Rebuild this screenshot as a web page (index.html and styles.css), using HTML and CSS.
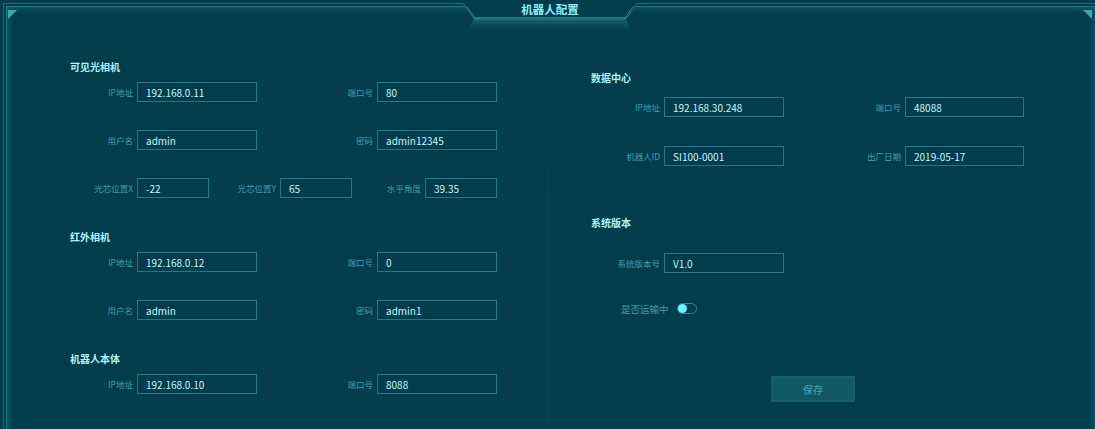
FILE: index.html
```html
<!DOCTYPE html>
<html lang="zh-CN">
<head>
    <meta charset="UTF-8">
    <meta name="viewport" content="width=device-width, initial-scale=1.0">
    <title>机器人配置</title>
    <link rel="stylesheet" href="styles.css">
</head>
<body>
    <div class="frame">
        <div class="panel">
            <!-- header notch cut into the top edge -->
            <svg class="notch" width="190" height="34" viewBox="0 0 190 34">
                <defs>
                    <linearGradient id="notch-glow" x1="0" y1="0" x2="0" y2="1">
                        <stop offset="0" stop-color="#2f8b97" stop-opacity="0.5"/>
                        <stop offset="1" stop-color="#2f8b97" stop-opacity="0"/>
                    </linearGradient>
                </defs>
                <polygon points="6,2 17,17 173,17 184,2" fill="#033d4d"/>
                <polygon points="19,18 171,18 176,30 14,30" fill="url(#notch-glow)"/>
                <path d="M0 3.5 H8 L18 17.5 H172 L182 3.5 H190" fill="none" stroke="#1f7784" stroke-width="1"/>
                <path d="M12 6.5 L20.5 19 H169.5 L178 6.5" fill="none" stroke="#2a8894" stroke-width="1"/>
            </svg>
            <h1 class="title">机器人配置</h1>
            <span class="corner corner-l"></span>
            <span class="corner corner-r"></span>

            <div class="cols">
                <div class="col col-left">
                    <section class="group">
                        <h2>可见光相机</h2>
                        <div class="rows">
                            <div class="row row-2">
                                <label>IP地址</label><input type="text" value="192.168.0.11">
                                <label>端口号</label><input type="text" value="80">
                            </div>
                            <div class="row row-2">
                                <label>用户名</label><input type="text" value="admin">
                                <label>密码</label><input type="text" value="admin12345">
                            </div>
                            <div class="row row-3">
                                <label>光芯位置X</label><input type="text" value="-22">
                                <label>光芯位置Y</label><input type="text" value="65">
                                <label>水平角度</label><input type="text" value="39.35">
                            </div>
                        </div>
                    </section>

                    <section class="group">
                        <h2>红外相机</h2>
                        <div class="rows">
                            <div class="row row-2">
                                <label>IP地址</label><input type="text" value="192.168.0.12">
                                <label>端口号</label><input type="text" value="0">
                            </div>
                            <div class="row row-2">
                                <label>用户名</label><input type="text" value="admin">
                                <label>密码</label><input type="text" value="admin1">
                            </div>
                        </div>
                    </section>

                    <section class="group">
                        <h2>机器人本体</h2>
                        <div class="rows">
                            <div class="row row-2">
                                <label>IP地址</label><input type="text" value="192.168.0.10">
                                <label>端口号</label><input type="text" value="8088">
                            </div>
                        </div>
                    </section>
                </div>

                <div class="col col-right">
                    <section class="group group-data">
                        <h2>数据中心</h2>
                        <div class="rows">
                            <div class="row row-2r">
                                <label>IP地址</label><input type="text" value="192.168.30.248">
                                <label>端口号</label><input type="text" value="48088">
                            </div>
                            <div class="row row-2r">
                                <label>机器人ID</label><input type="text" value="SI100-0001">
                                <label>出厂日期</label><input type="text" value="2019-05-17">
                            </div>
                        </div>
                    </section>

                    <section class="group group-version">
                        <h2>系统版本</h2>
                        <div class="rows">
                            <div class="row row-2r">
                                <label>系统版本号</label><input type="text" value="V1.0">
                            </div>
                        </div>
                    </section>

                    <div class="switch-row">
                        <span class="switch-label">是否运输中</span>
                        <input type="checkbox" id="transport" class="switch-input">
                        <label for="transport" class="switch"><span class="knob"></span></label>
                    </div>

                    <button type="button" class="save">保存</button>
                </div>
            </div>
        </div>
    </div>
</body>
</html>
```

FILE: styles.css
```css
body {
    margin: 0;
    background: #033d4d;
    font-family: "Noto Sans CJK SC", "Noto Sans", sans-serif;
    overflow: hidden;
}

.frame {
    margin: 3px -2px 0 3px;
    padding: 2px 0 0 2px;
    border-top: 1px solid #1c6a76;
    border-left: 1px solid #1c6a76;
}

.panel {
    position: relative;
    min-height: 440px;
    box-shadow: inset 0 0 0 1px rgba(52, 146, 160, 0.55), inset 0 0 10px rgba(58, 160, 176, 0.6);
}

.notch {
    position: absolute;
    left: 449px;
    top: -6px;
    display: block;
}

.title {
    position: absolute;
    left: 449px;
    top: -6px;
    width: 190px;
    margin: 0;
    line-height: 18px;
    font-size: 11.5px;
    font-weight: bold;
    text-align: center;
    color: #8eeefc;
}

.corner {
    position: absolute;
    top: 4px;
    width: 0;
    height: 0;
    border-top: 9px solid #3aa7b2;
}

.corner-l {
    left: 2px;
    border-right: 9px solid transparent;
}

.corner-r {
    right: 5px;
    border-left: 9px solid transparent;
}

.cols {
    display: flex;
    padding-top: 54px;
}

.col {
    min-height: 360px;
    box-sizing: border-box;
}

/* column divider fades in from the top */
.col-left {
    width: 543px;
    padding-left: 64px;
    border-right: 1px solid #08475a;
    border-image: linear-gradient(to bottom, rgba(8, 71, 90, 0) 0, rgba(8, 71, 90, 0) 90px, #08475a 150px) 1;
}

.col-right {
    padding-left: 42px;
    padding-top: 11px;
}

.group {
    margin-bottom: 32px;
}

.group h2 {
    margin: 0 0 8px;
    font-size: 10px;
    line-height: 14px;
    font-weight: bold;
    color: #aef2fd;
}

.rows {
    display: flex;
    flex-direction: column;
    gap: 28px;
}

.row {
    display: grid;
    column-gap: 4px;
    align-items: center;
}

.row-2 {
    grid-template-columns: 63px 120px 112px 120px;
}

.row-3 {
    grid-template-columns: 63px 72px 63px 72px 65px 72px;
}

.row-2r {
    grid-template-columns: 69px 120px 113px 119px;
}

.row label {
    font-size: 8.5px;
    color: #3a9fae;
    text-align: right;
    white-space: nowrap;
}

.row input {
    box-sizing: border-box;
    width: 100%;
    height: 20px;
    padding: 0 8px;
    border: 1px solid #1e7a87;
    background: transparent;
    color: #c2f5ff;
    font-family: inherit;
    font-size: 10px;
    outline: none;
}

.group-data h2 {
    margin-bottom: 12px;
}

.group-data .rows {
    gap: 29px;
}

.group-data {
    margin-bottom: 50px;
}

.group-version h2 {
    margin-bottom: 23px;
}

.group-version {
    margin-bottom: 30px;
}

.switch-row {
    display: flex;
    align-items: center;
    gap: 8px;
    padding-left: 30px;
    height: 11px;
}

.switch-label {
    font-size: 9.5px;
    color: #3a9aa6;
}

.switch-input {
    display: none;
}

.switch {
    position: relative;
    box-sizing: border-box;
    width: 20px;
    height: 11px;
    border: 1px solid #2a8793;
    border-radius: 6px;
    cursor: pointer;
}

.knob {
    position: absolute;
    left: 0;
    top: 0;
    width: 9px;
    height: 9px;
    border-radius: 50%;
    background: #6ef3ff;
    transition: .2s ease-in;
}

.switch-input:checked + .switch .knob {
    left: 9px;
}

.save {
    display: block;
    width: 84px;
    height: 26px;
    margin: 62px 0 0 180px;
    border: 2px solid #155e6a;
    background: #115864;
    color: #36aebe;
    font-family: inherit;
    font-size: 10px;
    cursor: pointer;
}

.save:hover {
    background: #14666f;
}
```
